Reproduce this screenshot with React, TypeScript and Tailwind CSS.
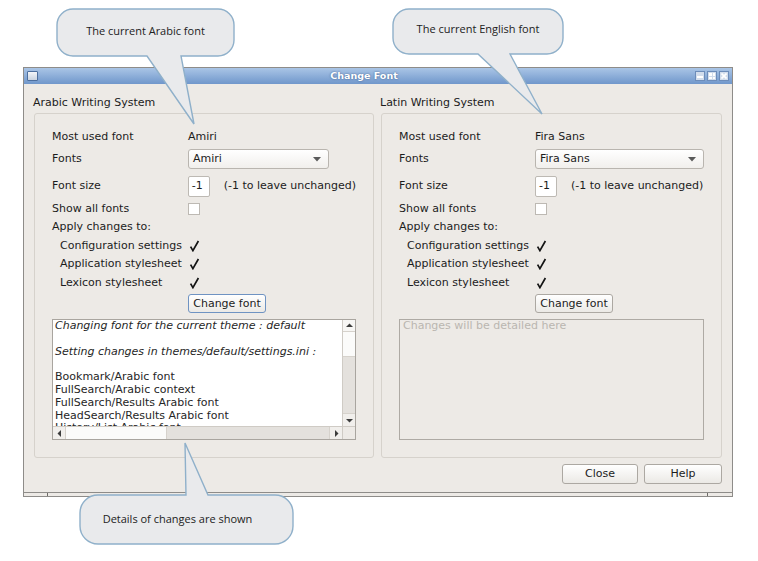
import React from "react";

const ui = { fontFamily: '"DejaVu Sans", "Liberation Sans", sans-serif' };
const balloonFont = { fontFamily: '"Open Sans", "Noto Sans", sans-serif' };

function Check() {
  return (
    <svg width="11" height="12" viewBox="0 0 11 12" className="block">
      <path d="M1.6 6.6 L3.9 10.6 L9.4 1" fill="none" stroke="#141414" strokeWidth="1.7" />
    </svg>
  );
}

function Arrow({ dir }: { dir: "up" | "down" | "left" | "right" }) {
  const pts = {
    up: "1,5 4.5,1.5 8,5",
    down: "1,2 4.5,5.5 8,2",
    left: "5,1 1.5,4.5 5,8",
    right: "2,1 5.5,4.5 2,8",
  }[dir];
  const box = dir === "up" || dir === "down" ? "0 0 9 7" : "0 0 7 9";
  const size = dir === "up" || dir === "down" ? { w: 9, h: 7 } : { w: 7, h: 9 };
  return (
    <svg width={size.w} height={size.h} viewBox={box}>
      <polygon points={pts} fill="#3c3c3c" />
    </svg>
  );
}

function Row({ h, mt, label, indent, children }: { h: string; mt: string; label: string; indent?: boolean; children?: React.ReactNode }) {
  return (
    <div className={`flex items-center ${h} ${mt}`}>
      <div className={indent ? "w-[136px] pl-[8px] whitespace-nowrap" : "w-[136px] whitespace-nowrap"}>{label}</div>
      {children}
    </div>
  );
}

function Group({
  title,
  font,
  comboW,
  focus,
  details,
}: {
  title: string;
  font: string;
  comboW: string;
  focus?: boolean;
  details?: boolean;
}) {
  return (
    <div className="flex flex-col">
      <div className="h-[14px] leading-[14px] -ml-px mb-[3px] text-[#1c1c1c]">{title}</div>
      <div className="h-[345px] border border-[#d6d2cc] rounded-[3px] px-[17px] pt-[13px] flex flex-col text-[#1c1c1c]">
        <Row h="h-[20px]" mt="" label="Most used font">
          <span>{font}</span>
        </Row>
        <Row h="h-[20px]" mt="mt-[2px]" label="Fonts">
          <div className={`${comboW} h-[20px] border border-[#b9b5af] rounded-[3px] bg-gradient-to-b from-white to-[#f1efec] flex items-center justify-between pl-[4px] pr-[7px]`}>
            <span>{font}</span>
            <svg width="8" height="5" viewBox="0 0 8 5">
              <polygon points="0,0 8,0 4,4.5" fill="#5a5a5a" />
            </svg>
          </div>
        </Row>
        <Row h="h-[20px]" mt="mt-[7px]" label="Font size">
          <div className="w-[22px] h-[21px] border border-[#bdb9b3] rounded-[2px] bg-white flex items-center pl-[3px]">-1</div>
          <span className="ml-[14px] whitespace-nowrap">(-1 to leave unchanged)</span>
        </Row>
        <Row h="h-[14px]" mt="mt-[6px]" label="Show all fonts">
          <div className="w-[12px] h-[12px] border border-[#bdb9b3] bg-white" />
        </Row>
        <Row h="h-[14px]" mt="mt-[4px]" label="Apply changes to:" />
        <Row h="h-[18px]" mt="mt-[3px]" label="Configuration settings" indent>
          <div className="ml-[1px]"><Check /></div>
        </Row>
        <Row h="h-[18px]" mt="" label="Application stylesheet" indent>
          <div className="ml-[1px]"><Check /></div>
        </Row>
        <Row h="h-[18px]" mt="mt-[1px]" label="Lexicon stylesheet" indent>
          <div className="ml-[1px]"><Check /></div>
        </Row>
        <div className="flex mt-[2px]">
          <div className="w-[136px]" />
          <button
            className={
              focus
                ? "w-[78px] h-[19px] border border-[#6f93c2] rounded-[3px] bg-gradient-to-b from-white to-[#ebe9e5] leading-[17px] text-[#1c1c1c]"
                : "w-[78px] h-[19px] border border-[#aca8a2] rounded-[3px] bg-gradient-to-b from-white to-[#ebe9e5] leading-[17px] text-[#1c1c1c]"
            }
          >
            Change font
          </button>
        </div>
        {details ? (
          <div className="mt-[6px] h-[121px] border border-[#a9a59f] bg-white flex flex-col">
            <div className="flex flex-1 min-h-0">
              <div className="flex-1 overflow-hidden pl-[2px] leading-[12.8px] text-[#262626] whitespace-nowrap">
                <div className="italic">Changing font for the current theme : default</div>
                <div>&nbsp;</div>
                <div className="italic">Setting changes in themes/default/settings.ini :</div>
                <div>&nbsp;</div>
                <div>Bookmark/Arabic font</div>
                <div>FullSearch/Arabic context</div>
                <div>FullSearch/Results Arabic font</div>
                <div>HeadSearch/Results Arabic font</div>
                <div>History/List Arabic font</div>
              </div>
              <div className="w-[13px] flex flex-col border-l border-[#cfcbc5]">
                <div className="h-[12px] bg-[#f7f6f4] flex items-center justify-center border-b border-[#d6d2cc]">
                  <Arrow dir="up" />
                </div>
                <div className="h-[25px] bg-[#fbfbfa] border-b border-[#d6d2cc]" />
                <div className="flex-1 bg-[#e4e1dd]" />
                <div className="h-[13px] bg-[#f1efec] flex items-center justify-center border-t border-[#d6d2cc]">
                  <Arrow dir="down" />
                </div>
              </div>
            </div>
            <div className="flex h-[13px] border-t border-[#cfcbc5]">
              <div className="w-[13px] bg-[#f1efec] flex items-center justify-center border-r border-[#d6d2cc]">
                <Arrow dir="left" />
              </div>
              <div className="w-[101px] bg-[#fbfbfa] border-r border-[#d6d2cc]" />
              <div className="flex-1 bg-[#e4e1dd]" />
              <div className="w-[13px] bg-[#f1efec] flex items-center justify-center border-l border-[#d6d2cc]">
                <Arrow dir="right" />
              </div>
              <div className="w-[13px] bg-[#edeae6] border-l border-[#cfcbc5]" />
            </div>
          </div>
        ) : (
          <div className="mt-[6px] h-[121px] border border-[#aeaaa4] bg-[#edeae6] pl-[3px] leading-[12.8px] text-[#bab6b0]">
            Changes will be detailed here
          </div>
        )}
      </div>
    </div>
  );
}

function Balloon({ d }: { d: string }) {
  return <path d={d} fill="#e9eaec" stroke="#8fb0ca" strokeWidth="1.4" />;
}

export default function App() {
  return (
    <div className="relative w-[758px] h-[561px] bg-white overflow-hidden pt-[67px] pl-[23px] text-[11px]" style={ui}>
      <div className="w-[710px] h-[430px] border border-[#8e8c89] bg-[#edeae6] flex flex-col">
        <div className="h-[16px] bg-gradient-to-b from-[#aac5e6] to-[#7097cb] flex items-center pl-[3px] pr-[3px]">
          <div className="w-[11px] h-[10px] border border-[#4d6f9e] bg-gradient-to-b from-[#f4f6f9] to-[#c9d3e0] rounded-[1px]" />
          <div className="flex-1 text-center font-bold text-[9.5px] text-white [text-shadow:0_0_2px_rgba(40,70,120,0.8)] pr-[5px]">
            Change Font
          </div>
          <div className="flex gap-[2px]">
            <div className="w-[10px] h-[10px] border border-[#6d8dba] bg-[#d2ddec] flex items-end justify-center pb-[2px]">
              <div className="w-[6px] h-[2px] bg-white" />
            </div>
            <div className="w-[10px] h-[10px] border border-[#6d8dba] bg-[#d2ddec] grid grid-cols-2 gap-[1px] p-[1px]">
              <div className="bg-white" />
              <div className="bg-white" />
              <div className="bg-white" />
              <div className="bg-white" />
            </div>
            <div className="w-[10px] h-[10px] border border-[#6d8dba] bg-[#d2ddec] flex items-center justify-center">
              <svg width="6" height="6" viewBox="0 0 6 6">
                <path d="M0.5 0.5 L5.5 5.5 M5.5 0.5 L0.5 5.5" stroke="white" strokeWidth="1.6" />
              </svg>
            </div>
          </div>
        </div>

        <div className="flex-1 flex flex-col pt-[12px] pl-[10px] pr-[10px]">
          <div className="grid grid-cols-[340px_341px] gap-[7px]">
            <Group title="Arabic Writing System" font="Amiri" comboW="w-[141px]" focus details />
            <Group title="Latin Writing System" font="Fira Sans" comboW="w-[169px]" />
          </div>
          <div className="flex justify-end gap-[6px] mt-[6px]">
            <button className="w-[76px] h-[20px] border border-[#aca8a2] rounded-[3px] bg-gradient-to-b from-white to-[#ebe9e5] text-[#1c1c1c]">
              Close
            </button>
            <button className="w-[78px] h-[20px] border border-[#aca8a2] rounded-[3px] bg-gradient-to-b from-white to-[#ebe9e5] text-[#1c1c1c]">
              Help
            </button>
          </div>
        </div>

        <div className="h-[4px] border-t border-[#8e8c89] flex">
          <div className="w-[24px] border-r border-[#6e6c69]" />
          <div className="flex-1" />
          <div className="w-[25px] border-l border-[#6e6c69]" />
        </div>
      </div>

      <svg className="absolute inset-0 pointer-events-none" width="758" height="561" viewBox="0 0 758 561">
        <Balloon d="M73 9 H218 A16 16 0 0 1 234 25 V40 A16 16 0 0 1 218 56 H181 L194 124 L147 56 H73 A16 16 0 0 1 57 40 V25 A16 16 0 0 1 73 9 Z" />
        <Balloon d="M409 9 H547 A16 16 0 0 1 563 25 V38 A16 16 0 0 1 547 54 H510 L542 114 L478 54 H409 A16 16 0 0 1 393 38 V25 A16 16 0 0 1 409 9 Z" />
        <Balloon d="M98 495 H186 L185 443 L208 495 H275 A18 18 0 0 1 293 513 V526 A18 18 0 0 1 275 544 H98 A18 18 0 0 1 80 526 V513 A18 18 0 0 1 98 495 Z" />
      </svg>
      <div className="absolute left-[57px] top-[9px] w-[177px] h-[45px] flex items-center justify-center text-[11px] text-[#222]" style={balloonFont}>
        The current Arabic font
      </div>
      <div className="absolute left-[393px] top-[8px] w-[170px] h-[43px] flex items-center justify-center text-[11px] text-[#222]" style={balloonFont}>
        The current English font
      </div>
      <div className="absolute left-[80px] top-[495px] w-[195px] h-[49px] flex items-center justify-center text-[11px] text-[#222]" style={balloonFont}>
        Details of changes are shown
      </div>
    </div>
  );
}
